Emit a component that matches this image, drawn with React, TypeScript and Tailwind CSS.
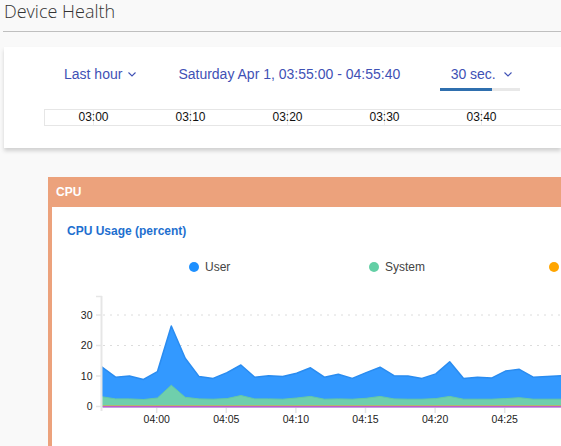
import React from 'react';

const user = [13, 9.6, 10, 8.9, 11.4, 26.4, 15.8, 9.8, 9.2, 11.1, 13.6, 9.6, 10.1, 9.8, 10.9, 12.7, 9.6, 10.6, 9.2, 11.1, 12.9, 10.1, 10, 9.2, 10.7, 14.7, 9.2, 9.6, 9.3, 11.6, 12.2, 9.6, 9.8, 10.1, 10.4];
const system = [3.2, 2.5, 2.5, 2.3, 2.8, 7, 3, 2.5, 2.4, 2.6, 3.6, 2.5, 2.5, 2.4, 2.8, 3.3, 2.4, 2.5, 2.4, 2.7, 3.3, 2.5, 2.4, 2.4, 2.6, 3.3, 2.4, 2.4, 2.4, 2.6, 2.9, 2.4, 2.4, 2.4, 2.5];

const X = (k: number) => 49.7 + 13.92 * k;
const Y = (v: number) => 116.5 - 3.05 * v;

function area(vals: number[]) {
  const top = vals.map((v, k) => `${X(k).toFixed(1)},${Y(v).toFixed(1)}`).join(' L');
  return `M${X(0)},${Y(0)} L${top} L${X(vals.length - 1)},${Y(0)} Z`;
}

function line(vals: number[]) {
  return 'M' + vals.map((v, k) => `${X(k).toFixed(1)},${Y(v).toFixed(1)}`).join(' L');
}

function Chevron() {
  return (
    <svg width="8" height="5" viewBox="0 0 8 5">
      <polyline points="0.5,0.5 4,4 7.5,0.5" fill="none" stroke="#3f51b5" strokeWidth="1.1" />
    </svg>
  );
}

function CpuChart() {
  const yTicks = [0, 10, 20, 30];
  const xLabels = ['04:00', '04:05', '04:10', '04:15', '04:20', '04:25'];
  return (
    <svg width="520" height="156" className="block" style={{ fontFamily: '"Liberation Sans", Arial, sans-serif' }}>
      {[20, 30].map((v) => (
        <line key={v} x1="51" x2="520" y1={Y(v)} y2={Y(v)} stroke="#dcdcdc" strokeWidth="1" strokeDasharray="2 5" />
      ))}
      <path d={area(user)} fill="#3399ff" stroke="#2a8cf0" strokeWidth="1.5" strokeLinejoin="round" />
      <path d={area(system)} fill="#6fcfac" />
      <path d={line(system)} fill="none" stroke="#66c9a4" strokeWidth="1" />
      <line x1="50.5" x2="520" y1="116" y2="116" stroke="#f0a030" strokeWidth="1" />
      <line x1="50.5" x2="520" y1="116.8" y2="116.8" stroke="#c25cc8" strokeWidth="1.5" />
      <line x1="49.5" x2="49.5" y1="6" y2="121" stroke="#e6e6e6" strokeWidth="2" />
      <line x1="44" x2="50" y1="6.5" y2="6.5" stroke="#e6e6e6" strokeWidth="1.5" />
      {yTicks.map((v) => (
        <g key={v}>
          <line x1="44" x2="49" y1={Y(v)} y2={Y(v)} stroke="#e6e6e6" strokeWidth="1.5" />
          <text x="40.5" y={Y(v) + 3.8} textAnchor="end" fontSize="10.5" fill="#222">{v}</text>
        </g>
      ))}
      {xLabels.map((t, i) => {
        const x = 104.7 + 69.6 * i;
        return (
          <g key={t}>
            <line x1={x} x2={x} y1="118" y2="123" stroke="#e6e6e6" strokeWidth="1.5" />
            <text x={x} y="133" textAnchor="middle" fontSize="10.5" fill="#222">{t}</text>
          </g>
        );
      })}
    </svg>
  );
}

export default function App() {
  const ticks = ['03:00', '03:10', '03:20', '03:30', '03:40'];
  const legend = [
    { label: 'User', color: 'bg-[#1e90ff]' },
    { label: 'System', color: 'bg-[#63cfa5]' },
    { label: '', color: 'bg-[#ffa500]' },
  ];

  return (
    <div className="h-[446px] w-full overflow-hidden bg-[#f9f9f9] font-['Liberation_Sans',Arial,sans-serif]">
      <div className="h-[31px] pl-[4px] font-['Open_Sans',sans-serif] text-[18px] font-light leading-[22px] text-[#333]">
        Device Health
      </div>
      <div className="ml-[3px] h-px bg-[#bfbfbf]" />

      {/* time range panel */}
      <div className="ml-[4px] mt-[15px] h-[101px] overflow-hidden bg-white shadow-[0_3px_4px_rgba(0,0,0,0.16)]">
        <div className="flex items-start pl-[60px] pt-[18px] text-[14px] leading-[18px] text-[#3f51b5]">
          <div className="flex items-center gap-[6px]">
            <span>Last hour</span>
            <Chevron />
          </div>
          <div className="ml-[42px]">Saturday Apr 1, 03:55:00 - 04:55:40</div>
          <div className="ml-[40px] flex w-[80px] flex-col">
            <div className="flex items-center justify-center gap-[8px] pl-[2px]">
              <span>30 sec.</span>
              <Chevron />
            </div>
            <div className="mt-[5px] flex h-[3px]">
              <div className="w-[52px] bg-[#2f6fae]" />
              <div className="flex-1 bg-[#e8e8e8]" />
            </div>
          </div>
        </div>
        <div className="ml-[40px] mt-[18px] flex h-[17px] w-[560px] border border-[#e6e6e6] text-[12px] leading-[15px] text-[#111]">
          {ticks.map((t) => (
            <div key={t} className="relative w-[97px] shrink-0 text-center">
              <div className="absolute left-[48px] top-0 h-full w-px bg-[#ececec]" />
              <span className="relative">{t}</span>
            </div>
          ))}
        </div>
      </div>

      {/* CPU card */}
      <div className="ml-[48px] mt-[29px] w-[560px]">
        <div className="h-[30px] bg-[#eca27c] pl-[8px] text-[12px] font-bold leading-[30px] text-white">CPU</div>
        <div className="h-[300px] border-l-[4px] border-[#eca27c] bg-white">
          <div className="pl-[15px] pt-[17px] text-[12px] font-bold leading-[15px] text-[#1e6fcf]">CPU Usage (percent)</div>
          <div className="mt-[21px] flex pl-[137px] text-[12px] leading-[14px] text-[#444]">
            {legend.map((l, i) => (
              <div key={i} className="flex w-[180px] shrink-0 items-center gap-[6px]">
                <span className={`h-[10px] w-[10px] rounded-full ${l.color}`} />
                {l.label && <span>{l.label}</span>}
              </div>
            ))}
          </div>
          <div className="mt-[16px]">
            <CpuChart />
          </div>
        </div>
      </div>
    </div>
  );
}
